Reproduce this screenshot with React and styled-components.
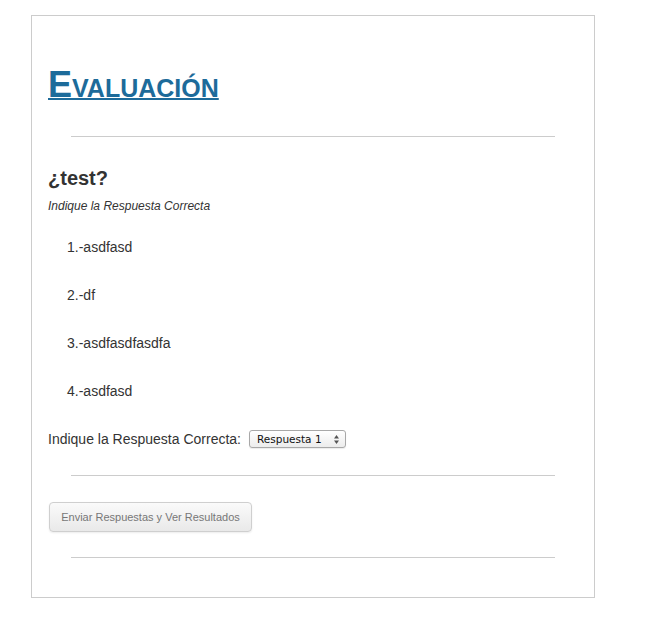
import React from "react";
import styled, { createGlobalStyle } from "styled-components";

const GlobalStyle = createGlobalStyle`
    body {
        margin: 0;
        background: #ffffff;
        font-family: "Liberation Sans", Arial, sans-serif;
        color: #333333;
    }
`;

const Page = styled.div`
    padding: 15px 0 0 31px;
`;

const Card = styled.div`
    width: 530px;
    height: 581px;
    border: 1px solid #cccccc;
    padding: 0 16px;
    box-sizing: content-box;
    display: flex;
    flex-direction: column;
`;

const Title = styled.h1`
    margin: 49px 0 0;
    font-size: 36px;
    line-height: 40px;
    font-weight: bold;
    font-variant: small-caps;
    color: #1d6b9a;
    text-decoration: underline;
    text-decoration-thickness: 2px;
    text-underline-offset: 1px;
`;

const Rule = styled.hr`
    margin: ${(p) => p.$top}px 23px 0;
    border: none;
    border-top: 1px solid #cccccc;
    height: 0;
`;

const Question = styled.h2`
    margin: 29px 0 0;
    font-size: 20px;
    line-height: 24px;
    font-weight: bold;
    color: #333333;
`;

const Hint = styled.div`
    margin-top: 8px;
    font-size: 12px;
    line-height: 16px;
    font-style: italic;
    color: #333333;
`;

const Options = styled.ol`
    list-style: none;
    margin: 23px 0 0;
    padding: 0 0 0 19px;
    display: flex;
    flex-direction: column;
    gap: 28px;
`;

const Option = styled.li`
    font-size: 14px;
    line-height: 20px;
`;

const AnswerRow = styled.div`
    margin-top: 28px;
    display: flex;
    align-items: center;
    gap: 8px;
    font-size: 14px;
    line-height: 20px;
`;

const Select = styled.div`
    display: flex;
    align-items: center;
    justify-content: space-between;
    width: 82px;
    height: 16px;
    padding: 0 6px 0 7px;
    border: 1px solid #a8a8a8;
    border-radius: 3px;
    background: linear-gradient(#ffffff, #ececec);
    font-family: "DejaVu Sans", sans-serif;
    font-size: 10.5px;
    line-height: 16px;
    color: #111111;
    box-shadow: 0 1px 1px rgba(0, 0, 0, 0.08);
`;

const App = () => {
    const options = ["asdfasd", "df", "asdfasdfasdfa", "asdfasd"];
    return (
        <Page>
            <GlobalStyle />
            <Card>
                <Title>Evaluación</Title>
                <Rule $top={31} />
                <Question>¿test?</Question>
                <Hint>Indique la Respuesta Correcta</Hint>
                <Options>
                    {options.map((o, i) => (
                        <Option key={i}>
                            {i + 1}.-{o}
                        </Option>
                    ))}
                </Options>
                <AnswerRow>
                    Indique la Respuesta Correcta:
                    <Select>
                        <span>Respuesta 1</span>
                        <svg width="5" height="9" viewBox="0 0 5 9">
                            <path d="M2.5 0 L5 3.5 L0 3.5 Z" fill="#555" />
                            <path d="M2.5 9 L5 5.5 L0 5.5 Z" fill="#555" />
                        </svg>
                    </Select>
                </AnswerRow>
                <Rule $top={26} />
                <SubmitButton>Enviar Respuestas y Ver Resultados</SubmitButton>
                <Rule $top={25} />
            </Card>
        </Page>
    );
};

const SubmitButton = styled.button`
    margin: 26px 0 0 1px;
    align-self: flex-start;
    width: 203px;
    height: 30px;
    border: 1px solid #cfcfcf;
    border-radius: 4px;
    background: linear-gradient(#fafafa, #e9e9e9);
    box-shadow: 0 1px 2px rgba(0, 0, 0, 0.08);
    font-family: "Liberation Sans", Arial, sans-serif;
    font-size: 11px;
    color: #777777;
    cursor: pointer;
`;

export default App;
